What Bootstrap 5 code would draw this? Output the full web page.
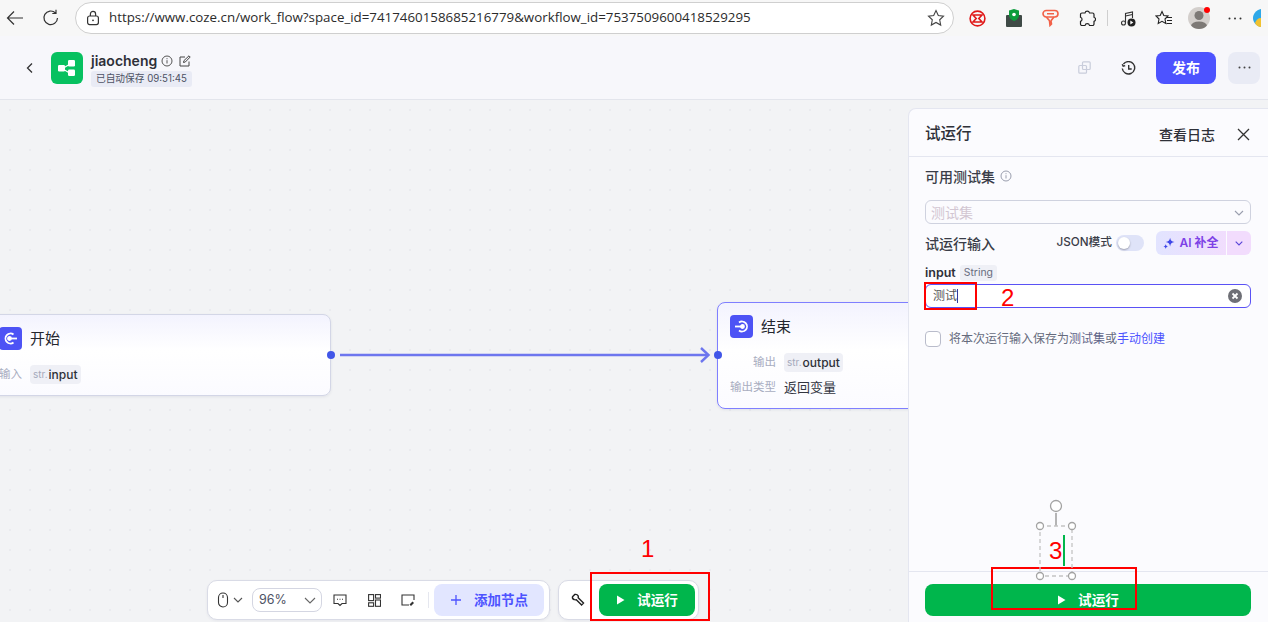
<!DOCTYPE html>
<html lang="zh-CN">
<head>
    <meta charset="UTF-8">
    <title>jiaocheng - 工作流</title>
    <link href="https://cdn.jsdelivr.net/npm/bootstrap@5.3.0/dist/css/bootstrap.min.css" rel="stylesheet">
    <style>
        html, body { height: 100%; overflow: hidden; }
        body { font-family: Inter, "Noto Sans CJK SC", sans-serif; font-size: 12px; color: #1d1f2b; background: #f2f3f5; }
        svg { display: block; flex: none; }

        /* browser chrome */
        .browser-bar { height: 36px; background: #f7f7f7; padding-left: 4px; }
        .browser-btn { width: 21px; height: 32px; margin-right: 15px; }
        .url-pill { width: 879px; height: 32px; margin-top: -1px; margin-left: -1px; background: #fff; border: 1px solid #cfcfcf; border-radius: 16px; padding: 0 8px 0 10px; }
        .url-text { font-family: "Open Sans", "Liberation Sans", sans-serif; font-size: 13.33px; color: #2b2b2b; margin-left: 9px; white-space: nowrap; }
        .ext-row { padding-left: 5px; }
        .ext { width: 36.6px; height: 32px; }
        .ext-tight { width: 35.6px; }
        .ext-sep { width: 1px; height: 16px; background: #cfcfcf; margin: 0 2px 0 2px; }
        .avatar { width: 22px; height: 22px; border-radius: 50%; background: #d3cfcc; overflow: hidden; }
        .avatar-dot { width: 6px; height: 6px; top: 5px; right: 7px; background: #f00; border-radius: 50%; }

        /* app header */
        .app-header { height: 64px; background: #f7f7fb; border-bottom: 1px solid #e3e5ec; padding: 0 8px 0 24px; }
        .back-link { width: 27px; }
        .logo { width: 32px; height: 32px; background: #07c160; border-radius: 6px; margin-right: 8px; }
        .flow-name { font-size: 14px; font-weight: 600; line-height: 18px; color: #2e3038; }
        .edit-icon { margin-left: 6px; }
        .save-tag { height: 16px; line-height: 16px; padding: 0 5px; font-size: 9.7px; color: #4d5264; background: #e9ebf5; border-radius: 3px; margin-top: 1px; white-space: nowrap; }
        .icon-slot { width: 32px; height: 32px; }
        .history-slot { margin: 1px 12px 0; }
        .btn-publish { width: 60px; height: 32px; padding: 0; background: #4d53ff; border: 0; border-radius: 8px; color: #fff; font-size: 14px; font-weight: 700; }
        .btn-more { width: 32px; height: 32px; background: #e9ebf5; border-radius: 8px; margin-left: 12px; }

        /* canvas */
        .workspace { height: 522px; }
        .flow-canvas { width: 908px; background-color: #f2f3f5; background-image: radial-gradient(#eaebef 1px, transparent 1px); background-size: 20px 20px; overflow: hidden; }
        .edge-layer { left: 0; top: 0; }
        .flow-node { background: linear-gradient(180deg, #f3f3fe 0%, #ffffff 45%, #fbfbff 100%); border: 1px solid #d3d6e6; border-radius: 8px; box-shadow: 0 1px 3px rgba(30, 35, 80, .08); }
        .node-start { left: -30px; top: 214px; width: 361px; height: 82px; }
        .node-end { left: 717px; top: 202px; width: 260px; height: 107px; border-color: #7f7fff; }
        .node-icon { width: 23px; height: 23px; background: #4d53f5; border-radius: 4px; margin-right: 8px; }
        .node-title { font-size: 15px; line-height: 23px; color: #24262e; }
        .start-head { padding: 12px 0 0 28px; }
        .start-input { padding: 15px 0 0 28px; }
        .end-head { padding: 12px 0 0 12px; }
        .end-output { padding: 15px 0 0 12px; }
        .end-type { padding: 6px 0 0 12px; }
        .node-label { font-size: 11.5px; color: #a8adbf; text-align: right; white-space: nowrap; margin-right: 8px; }
        .label-wide { width: 46px; }
        .var-tag { height: 19px; padding: 0 3px; background: #eff0f6; border-radius: 4px; font-size: 12px; line-height: 19px; color: #2e3038; font-weight: 500; }
        .var-tag small { font-size: 10px; font-weight: 400; color: #a4a9bb; margin-right: 1px; position: relative; top: -1px; }
        .node-value { font-size: 13px; color: #33353f; }
        .port { width: 8px; height: 8px; background: #4156e8; border-radius: 50%; }
        .port-out { left: 327px; top: 251px; }
        .port-in { left: 714px; top: 251px; }

        /* bottom toolbars */
        .tool-group { top: 480px; height: 40px; background: #fff; border: 1px solid #d9dbe6; border-radius: 10px; box-shadow: 0 1px 3px rgba(30, 35, 80, .06); }
        .tools-left { left: 207px; width: 343px; padding: 0 3px 0 9px; }
        .tools-right { left: 558px; width: 141px; padding: 0 3px 0 12px; }
        .zoom-box { width: 70px; height: 24px; margin: 0 1px 0 9px; border: 1px solid #d4d6e2; border-radius: 8px; padding: 0 5px 0 6px; font-size: 12.5px; color: #4d5264; }
        .tool-icon { width: 34px; }
        .tool-sep { width: 1px; height: 16px; background: #e5e7ef; margin: 0 5px 0 3px; }
        .btn-add { width: 110px; height: 32px; background: #e2e6ff; border: 0; border-radius: 8px; padding: 0; color: #4d53ff; font-size: 13.5px; font-weight: 600; }
        .btn-run { height: 32px; border: 0; border-radius: 8px; padding: 0; background: #00b64c; color: #fff; font-size: 13.6px; font-weight: 700; }
        .tools-right .btn-run { width: 96px; margin-left: 14px; }

        /* test run panel */
        .run-panel { width: 360px; margin-top: 8px; background: #fbfbfe; border: 1px solid #e4e6f0; border-right: 0; border-bottom: 0; border-radius: 8px 0 0 0; }
        .panel-head { height: 48px; padding: 3px 18px 0 16px; border-bottom: 1px solid #e4e6f0; }
        .panel-title { font-size: 15.5px; font-weight: 500; color: #2e3038; }
        .panel-link { font-size: 14px; font-weight: 500; color: #2e3038; margin-right: 22px; }
        .panel-body { padding: 0 17px 0 16px; }
        .section-title { font-size: 14px; font-weight: 500; color: #3a3d48; }
        .testset-row { height: 41px; padding-bottom: 3px; }
        .testset-info { margin-left: 5px; }
        .testset-select { height: 24px; padding: 1px 6px 0 5px; margin-top: 2px; border: 1px solid #cfd2df; border-radius: 6px; font-size: 14px; color: #d2c6d2; }
        .input-title-row { height: 33px; margin-top: 3px; padding-bottom: 1px; }
        .json-label { font-size: 11.7px; font-weight: 500; color: #3a3d48; margin-right: 4px; }
        .json-switch { width: 28px; height: 16px; background: #dfe3f8; border-radius: 8px; margin-right: 12px; padding: 2px; }
        .json-knob { width: 12px; height: 12px; background: #fff; border-radius: 50%; box-shadow: 0 1px 2px rgba(0, 0, 0, .3); }
        .ai-btn { width: 70px; height: 24px; background: linear-gradient(90deg, #e2e4ff, #f1ddfd); border-radius: 6px 0 0 6px; font-size: 12px; font-weight: 600; color: #7d42e6; margin-right: 1px; }
        .ai-more { width: 24px; height: 24px; background: #f2dcfd; border-radius: 0 6px 6px 0; }
        .field-label { height: 16px; margin-top: 5px; font-size: 12.5px; font-weight: 600; color: #2e3038; line-height: 16px; }
        .type-tag { height: 16px; padding: 0 4px; margin-left: 4px; background: #eff0f6; border-radius: 3px; font-size: 10.4px; font-weight: 400; color: #666b7d; }
        .test-input { height: 24px; margin-top: 3px; padding: 0 8px 0 7px; background: #fff; border: 1px solid #5a52f5; border-radius: 6px; font-size: 12px; color: #555; }
        .text-caret { width: 1px; height: 14px; background: #333a9e; }
        .save-row { margin-top: 22px; font-size: 12px; color: #666b7d; }
        .fake-check { width: 16px; height: 16px; border: 1px solid #b9bccb; border-radius: 4px; background: #fff; margin-right: 8px; }
        .save-row a { color: #4d53ff; text-decoration: none; }
        .save-row a.soft-link { color: #5f6488; }
        .panel-foot { height: 51px; left: 0; right: 0; top: 462px; border-top: 1px solid #e4e6f0; padding: 12px 17px 0 16px; }
        .panel-foot .btn-run { width: 326px; }

        /* screenshot annotations */
        .mark-box { border: 2px solid #f00; pointer-events: none; }
        .mark-num { color: #f00; font-family: "Liberation Sans", sans-serif; font-size: 24px; line-height: 1; }
        .mark-1 { left: 590px; top: 472px; width: 120px; height: 49px; }
        .mark-2 { left: 924px; top: 182px; width: 53px; height: 28px; }
        .mark-3 { left: 991px; top: 467px; width: 146px; height: 43px; }
        .num-1 { left: 641px; top: 437px; }
        .num-2 { left: 1001px; top: 186px; }
        .num-3 { left: 1049px; top: 439px; }
        .shape-layer { left: 1030px; top: 395px; }
    </style>
</head>
<body>
    <div class="browser-bar d-flex align-items-center">
        <div class="browser-btn d-flex align-items-center justify-content-center">
            <svg width="18" height="16" viewBox="0 0 18 16" fill="none" stroke="#333" stroke-width="1.2"><path d="M17 8H1.5M8 1.5 1.5 8 8 14.5"/></svg>
        </div>
        <div class="browser-btn d-flex align-items-center justify-content-center">
            <svg width="18" height="18" viewBox="0 0 18 18" fill="none" stroke="#333" stroke-width="1.2"><path d="M15.5 9A6.8 6.8 0 1 1 13.5 4M14 .8v3.7h-3.7"/></svg>
        </div>
        <div class="url-pill d-flex align-items-center">
            <svg width="14" height="16" viewBox="0 0 14 16" fill="none" stroke="#333" stroke-width="1.2"><rect x="1.6" y="6" width="10.8" height="8.6" rx="2"/><path d="M4.4 6V4a2.6 2.6 0 0 1 5.2 0v2"/><circle cx="7" cy="10.3" r=".9" fill="#333" stroke="none"/></svg>
            <span class="url-text flex-grow-1">https://www.coze.cn/work_flow?space_id=7417460158685216779&amp;workflow_id=7537509600418529295</span>
            <svg width="18" height="18" viewBox="0 0 18 18" fill="none" stroke="#444" stroke-width="1.1"><path d="m9 1.6 2.3 4.9 5.2.7-3.8 3.6 1 5.3L9 13.5l-4.7 2.6 1-5.3-3.8-3.6 5.2-.7z"/></svg>
        </div>
        <div class="ext-row d-flex align-items-center">
            <div class="ext d-flex align-items-center justify-content-center">
                <svg width="17" height="17" viewBox="0 0 17 17" fill="none" stroke="#e01818" stroke-width="1.6"><circle cx="8.5" cy="8.5" r="7.4"/><path d="M4 5h9L9.8 8.5 13 12H4l3.2-3.5z"/></svg>
            </div>
            <div class="ext d-flex align-items-center justify-content-center">
                <svg width="16" height="18" viewBox="0 0 16 18"><rect y="6" width="16" height="12" rx="1" fill="#3f4a46"/><path d="M8 0l5 1.6V6c0 3-2.2 4.8-5 6-2.8-1.2-5-3-5-6V1.6z" fill="#0c9c3c"/><circle cx="8" cy="5.5" r="1.8" fill="#fff"/></svg>
            </div>
            <div class="ext d-flex align-items-center justify-content-center">
                <svg width="17" height="18" viewBox="0 0 17 18" fill="none" stroke="#f26148" stroke-width="1.6"><rect x="1" y="1.5" width="15" height="6.5" rx="3.25"/><rect x="5" y="4" width="7" height="1.5" fill="#f26148" stroke="none"/><path d="M4.5 8c1 2 2.5 2.5 3 4l.5 4.5 1.500-1.500-.5-3c.5-1.500 2-2.500 3-4"/></svg>
            </div>
            <div class="ext d-flex align-items-center justify-content-center">
                <svg width="17" height="17" viewBox="0 0 17 17" fill="none" stroke="#222" stroke-width="1.2"><path d="M6 3a2.3 2.3 0 0 1 4.500 0h3a1.500 1.500 0 0 1 1.500 1.500v2.700a2.200 2.200 0 0 1 0 4.200v2.600a1.500 1.500 0 0 1-1.500 1.500h-3a2.300 2.300 0 0 0-4.500 0H3a1.500 1.500 0 0 1-1.500-1.500v-2.600a2.200 2.200 0 0 0 0-4.200V4.500A1.500 1.500 0 0 1 3 3z"/></svg>
            </div>
            <div class="ext-sep"></div>
            <div class="ext ext-tight d-flex align-items-center justify-content-center">
                <svg width="17" height="17" viewBox="0 0 17 17" fill="none" stroke="#333" stroke-width="1.1"><circle cx="3.5" cy="13" r="2"/><path d="M5.5 13V3.500l7-1.500v6"/><path d="M5.5 6l7-1.500"/><circle cx="11.5" cy="12.5" r="4" fill="#222" stroke="none"/><path d="M10.3 10.500v4l3-2z" fill="#fff" stroke="none"/></svg>
            </div>
            <div class="ext ext-tight d-flex align-items-center justify-content-center">
                <svg width="18" height="17" viewBox="0 0 18 17" fill="none" stroke="#222" stroke-width="1.1"><path d="m7 1.500 1.800 4 4.200.5-3 3 .8 4.500L7 11.300 3.200 13.500 4 9 1 6l4.200-.5z"/><path d="M12 7.500h5M12 10.500h5M11.500 13.500h5.500"/></svg>
            </div>
            <div class="ext ext-tight d-flex align-items-center justify-content-center position-relative">
                <div class="avatar">
                    <svg width="22" height="22" viewBox="0 0 22 22" fill="#7d7976"><circle cx="11" cy="8.5" r="4.5"/><ellipse cx="11" cy="19" rx="8" ry="4.5"/></svg>
                </div>
                <div class="avatar-dot position-absolute"></div>
            </div>
            <div class="ext ext-tight d-flex align-items-center justify-content-center">
                <svg width="14" height="3" viewBox="0 0 14 3" fill="#333"><circle cx="1.5" cy="1.5" r="1"/><circle cx="7" cy="1.5" r="1"/><circle cx="12.5" cy="1.5" r="1"/></svg>
            </div>
            <svg width="8" height="18" viewBox="0 0 8 18"><path d="M8 0C3 1 0 5 0 9s3 8 8 9z" fill="#2fa8e8"/><path d="M8 9c-3 0-5 2-6 5 1 2 3 4 6 4z" fill="#f2c230"/></svg>
        </div>
    </div>

    <header class="app-header d-flex align-items-center">
        <div class="back-link">
            <svg width="12" height="12" viewBox="0 0 12 12" fill="none" stroke="#333" stroke-width="1.3"><path d="M8 1.5 3.5 6 8 10.500"/></svg>
        </div>
        <div class="logo d-flex align-items-center justify-content-center">
            <svg width="20" height="18" viewBox="0 0 20 18" fill="#fff"><rect x="1" y="6" width="7" height="6.5" rx="1.2"/><rect x="11" y="1" width="7" height="6.5" rx="1.2"/><rect x="11" y="10.5" width="7" height="6.5" rx="1.2"/><path d="M7 8l5-3 .6 1-5 3zM7 10l5 3-.6 1-5-3z"/></svg>
        </div>
        <div class="pt-1">
            <div class="d-flex align-items-center">
                <span class="flow-name">jiaocheng</span>
                <svg class="ms-1" width="12" height="12" viewBox="0 0 12 12" fill="none" stroke="#555" stroke-width="1"><circle cx="6" cy="6" r="5"/><path d="M6 5.2v3.300M6 3.200v1"/></svg>
                <svg class="edit-icon" width="12" height="12" viewBox="0 0 12 12" fill="none" stroke="#444" stroke-width="1"><path d="M10 6.5V11H1V2h5"/><path d="m4.500 7.500.4-1.800L10 .8l1.200 1.200L6.300 7z"/></svg>
            </div>
            <div class="save-tag">已自动保存 09:51:45</div>
        </div>
        <div class="ms-auto d-flex align-items-center">
            <div class="icon-slot d-flex align-items-center justify-content-center">
                <svg width="13" height="13" viewBox="0 0 13 13" fill="none" stroke="#c9cddb" stroke-width="1.2"><rect x="4.5" y=".8" width="7.7" height="7.7" rx="1"/><rect x=".8" y="4.5" width="7.7" height="7.7" rx="1"/></svg>
            </div>
            <div class="icon-slot history-slot d-flex align-items-center justify-content-center">
                <svg width="15" height="15" viewBox="0 0 15 15" fill="none" stroke="#333" stroke-width="1.4"><path d="M2.400 3.200A6.200 6.200 0 1 1 1.300 7.500"/><path d="M1.200 3.200 2.200 5.200l2-.6M7.700 4v4h3"/></svg>
            </div>
            <button class="btn btn-publish">发布</button>
            <div class="btn-more d-flex align-items-center justify-content-center">
                <svg width="13" height="3" viewBox="0 0 13 3" fill="#444"><circle cx="1.5" cy="1.5" r="1"/><circle cx="6.5" cy="1.5" r="1"/><circle cx="11.5" cy="1.5" r="1"/></svg>
            </div>
        </div>
    </header>

    <div class="workspace d-flex position-relative">
        <div class="flow-canvas position-relative flex-grow-0">
            <svg class="edge-layer position-absolute" width="908" height="522" fill="none" stroke="#6d76ee" stroke-width="2.4"><path d="M340 255H708"/><path d="m701 248 7.500 7-7.500 7"/></svg>

            <div class="flow-node node-start position-absolute">
                <div class="start-head d-flex align-items-center">
                    <div class="node-icon d-flex align-items-center justify-content-center">
                        <svg width="15" height="13" viewBox="0 0 15 13" fill="none" stroke="#fff" stroke-width="1.8"><path d="M10.500 2.500a5 5 0 1 0 0 8"/><circle cx="6.5" cy="6.5" r="1.5" fill="#fff"/><path d="M7 6.500h7"/></svg>
                    </div>
                    <span class="node-title">开始</span>
                </div>
                <div class="start-input d-flex align-items-center">
                    <span class="node-label">输入</span>
                    <span class="var-tag"><small>str.</small>input</span>
                </div>
            </div>
            <div class="port port-out position-absolute"></div>

            <div class="flow-node node-end position-absolute">
                <div class="end-head d-flex align-items-center">
                    <div class="node-icon d-flex align-items-center justify-content-center">
                        <svg width="15" height="13" viewBox="0 0 15 13" fill="none" stroke="#fff" stroke-width="1.8"><path d="M5 2.500a5 5 0 1 1 0 8"/><circle cx="8.5" cy="6.5" r="1.5" fill="#fff"/><path d="M1 6.500h7"/></svg>
                    </div>
                    <span class="node-title">结束</span>
                </div>
                <div class="end-output d-flex align-items-center">
                    <span class="node-label label-wide">输出</span>
                    <span class="var-tag"><small>str.</small>output</span>
                </div>
                <div class="end-type d-flex align-items-center">
                    <span class="node-label label-wide">输出类型</span>
                    <span class="node-value">返回变量</span>
                </div>
            </div>
            <div class="port port-in position-absolute"></div>

            <div class="tool-group tools-left position-absolute d-flex align-items-center">
                <svg width="12" height="16" viewBox="0 0 12 16" fill="none" stroke="#333" stroke-width="1.1"><rect x="1.5" y="1" width="9" height="14" rx="4.5"/><path d="M6 3v3"/></svg>
                <svg class="ms-1" width="10" height="6" viewBox="0 0 10 6" fill="none" stroke="#555" stroke-width="1.1"><path d="m1 1 4 4 4-4"/></svg>
                <div class="zoom-box d-flex align-items-center justify-content-between">
                    <span>96%</span>
                    <svg width="12" height="7" viewBox="0 0 12 7" fill="none" stroke="#666" stroke-width="1.1"><path d="m1 1 5 5 5-5"/></svg>
                </div>
                <div class="tool-icon d-flex justify-content-center">
                    <svg width="14" height="13" viewBox="0 0 14 13" fill="none" stroke="#333" stroke-width="1.1"><path d="M1 1h12v8.500H9L7 11.500 5 9.500H1z"/><path d="M4 5.200h1M6.500 5.200h1M9 5.200h1"/></svg>
                </div>
                <div class="tool-icon d-flex justify-content-center">
                    <svg width="13" height="13" viewBox="0 0 13 13" fill="none" stroke="#333" stroke-width="1.1"><rect x=".6" y=".6" width="5" height="6"/><rect x="7.5" y=".6" width="5" height="3.5"/><rect x=".6" y="8.8" width="5" height="3.5"/><rect x="7.5" y="6" width="5" height="6.3"/></svg>
                </div>
                <div class="tool-icon d-flex justify-content-center">
                    <svg width="14" height="12" viewBox="0 0 14 12" fill="none" stroke="#333" stroke-width="1.1"><path d="M13 6V1H1v10h7"/><path d="m8.500 10.500 3-3 1.500 1.500-3 3z" fill="#333" stroke="none"/></svg>
                </div>
                <div class="tool-sep"></div>
                <button class="btn btn-add d-flex align-items-center justify-content-center">
                    <svg class="me-2" width="12" height="12" viewBox="0 0 12 12" stroke="#4d53ff" stroke-width="1.3"><path d="M6 1v10M1 6h10"/></svg>
                    <span class="ms-1">添加节点</span>
                </button>
            </div>

            <div class="tool-group tools-right position-absolute d-flex align-items-center">
                <svg width="14" height="14" viewBox="0 0 14 14" fill="none" stroke="#222" stroke-width="1.4"><path d="M1.500 3.800 3.800 1.500c1.200-.3 2.600.1 3.200 1.100.4.700.4 1.500.2 2.200l5.300 5.300-1.900 1.900-5.300-5.300c-.7.200-1.500.2-2.200-.2C1.600 5.900 1.200 5 1.500 3.800z"/></svg>
                <button class="btn btn-run d-flex align-items-center justify-content-center">
                    <svg class="me-2" width="9" height="10" viewBox="0 0 9 10" fill="#fff"><path d="M1 .5v9l7.500-4.500z"/></svg>
                    <span class="ms-1">试运行</span>
                </button>
            </div>
        </div>

        <aside class="run-panel position-relative">
            <div class="panel-head d-flex align-items-center">
                <span class="panel-title flex-grow-1">试运行</span>
                <span class="panel-link">查看日志</span>
                <svg width="13" height="13" viewBox="0 0 13 13" stroke="#333" stroke-width="1.3"><path d="m1 1 11 11M12 1 1 12"/></svg>
            </div>
            <div class="panel-body">
                <div class="testset-row d-flex align-items-center">
                    <span class="section-title">可用测试集</span>
                    <svg class="testset-info" width="12" height="12" viewBox="0 0 12 12" fill="none" stroke="#9a9eae" stroke-width="1"><circle cx="6" cy="6" r="5"/><path d="M6 5.200v3.300M6 3.200v1"/></svg>
                </div>
                <div class="testset-select d-flex align-items-center justify-content-between">
                    <span>测试集</span>
                    <svg width="10" height="6" viewBox="0 0 10 6" fill="none" stroke="#9a9eae" stroke-width="1.1"><path d="m1 1 4 4 4-4"/></svg>
                </div>
                <div class="input-title-row d-flex align-items-center">
                    <span class="section-title flex-grow-1">试运行输入</span>
                    <span class="json-label">JSON模式</span>
                    <div class="json-switch"><div class="json-knob"></div></div>
                    <div class="ai-btn d-flex align-items-center justify-content-center">
                        <svg class="me-1" width="12" height="12" viewBox="0 0 11 11" fill="#3f47e8"><path d="M6.500 .6c.4 2.500 1.500 3.500 4 4-2.500.5-3.600 1.500-4 4-.4-2.500-1.500-3.500-4-4 2.500-.5 3.600-1.500 4-4zM2.500 6.500c.2 1.300.9 2 2.200 2.200-1.300.2-2 .9-2.200 2.200-.2-1.300-.9-2-2.200-2.200 1.300-.2 2-.9 2.200-2.200z"/></svg>
                        <span>AI 补全</span>
                    </div>
                    <div class="ai-more d-flex align-items-center justify-content-center">
                        <svg width="8" height="5" viewBox="0 0 8 5" fill="none" stroke="#5a45d8" stroke-width="1.1"><path d="m.7.7 3.300 3.300L7.300.7"/></svg>
                    </div>
                </div>
                <div class="field-label d-flex align-items-center">
                    <span>input</span>
                    <span class="type-tag">String</span>
                </div>
                <div class="test-input d-flex align-items-center">
                    <span>测试</span><span class="text-caret"></span>
                    <svg class="ms-auto" width="14" height="14" viewBox="0 0 14 14"><circle cx="7" cy="7" r="7" fill="#6e6f76"/><path d="m4.500 4.500 5 5M9.500 4.500l-5 5" stroke="#fff" stroke-width="1.8"/></svg>
                </div>
                <div class="save-row d-flex align-items-center">
                    <span class="fake-check"></span>
                    <span>将本次运行输入保存为<a class="soft-link" href="#">测试集</a>或<a href="#">手动创建</a></span>
                </div>
            </div>
            <div class="panel-foot position-absolute">
                <button class="btn btn-run d-flex align-items-center justify-content-center">
                    <svg class="me-2" width="9" height="10" viewBox="0 0 9 10" fill="#fff"><path d="M1 .5v9l7.500-4.500z"/></svg>
                    <span class="ms-1">试运行</span>
                </button>
            </div>
        </aside>

        <div class="mark-box mark-1 position-absolute"></div>
        <div class="mark-box mark-2 position-absolute"></div>
        <div class="mark-box mark-3 position-absolute"></div>
        <span class="mark-num num-1 position-absolute">1</span>
        <span class="mark-num num-2 position-absolute">2</span>
        <span class="mark-num num-3 position-absolute">3</span>
        <svg class="shape-layer position-absolute" width="52" height="90" viewBox="0 0 52 90" fill="#fff" stroke="#a3a3a3" stroke-width="1.3">
            <path d="M26 18V31" stroke-width="1.6"/>
            <rect x="10" y="31" width="32" height="50" fill="none" stroke="#c4c4c4" stroke-dasharray="4 3"/>
            <circle cx="26" cy="11" r="5.5"/>
            <circle cx="10" cy="31" r="3.5"/><circle cx="42" cy="31" r="3.5"/>
            <circle cx="10" cy="81" r="3.5"/><circle cx="42" cy="81" r="3.5"/>
            <path d="M34 40V71" stroke="#00b64c" stroke-width="2"/>
        </svg>
    </div>

    <script src="https://cdn.jsdelivr.net/npm/bootstrap@5.3.0/dist/js/bootstrap.bundle.min.js"></script>
</body>
</html>
